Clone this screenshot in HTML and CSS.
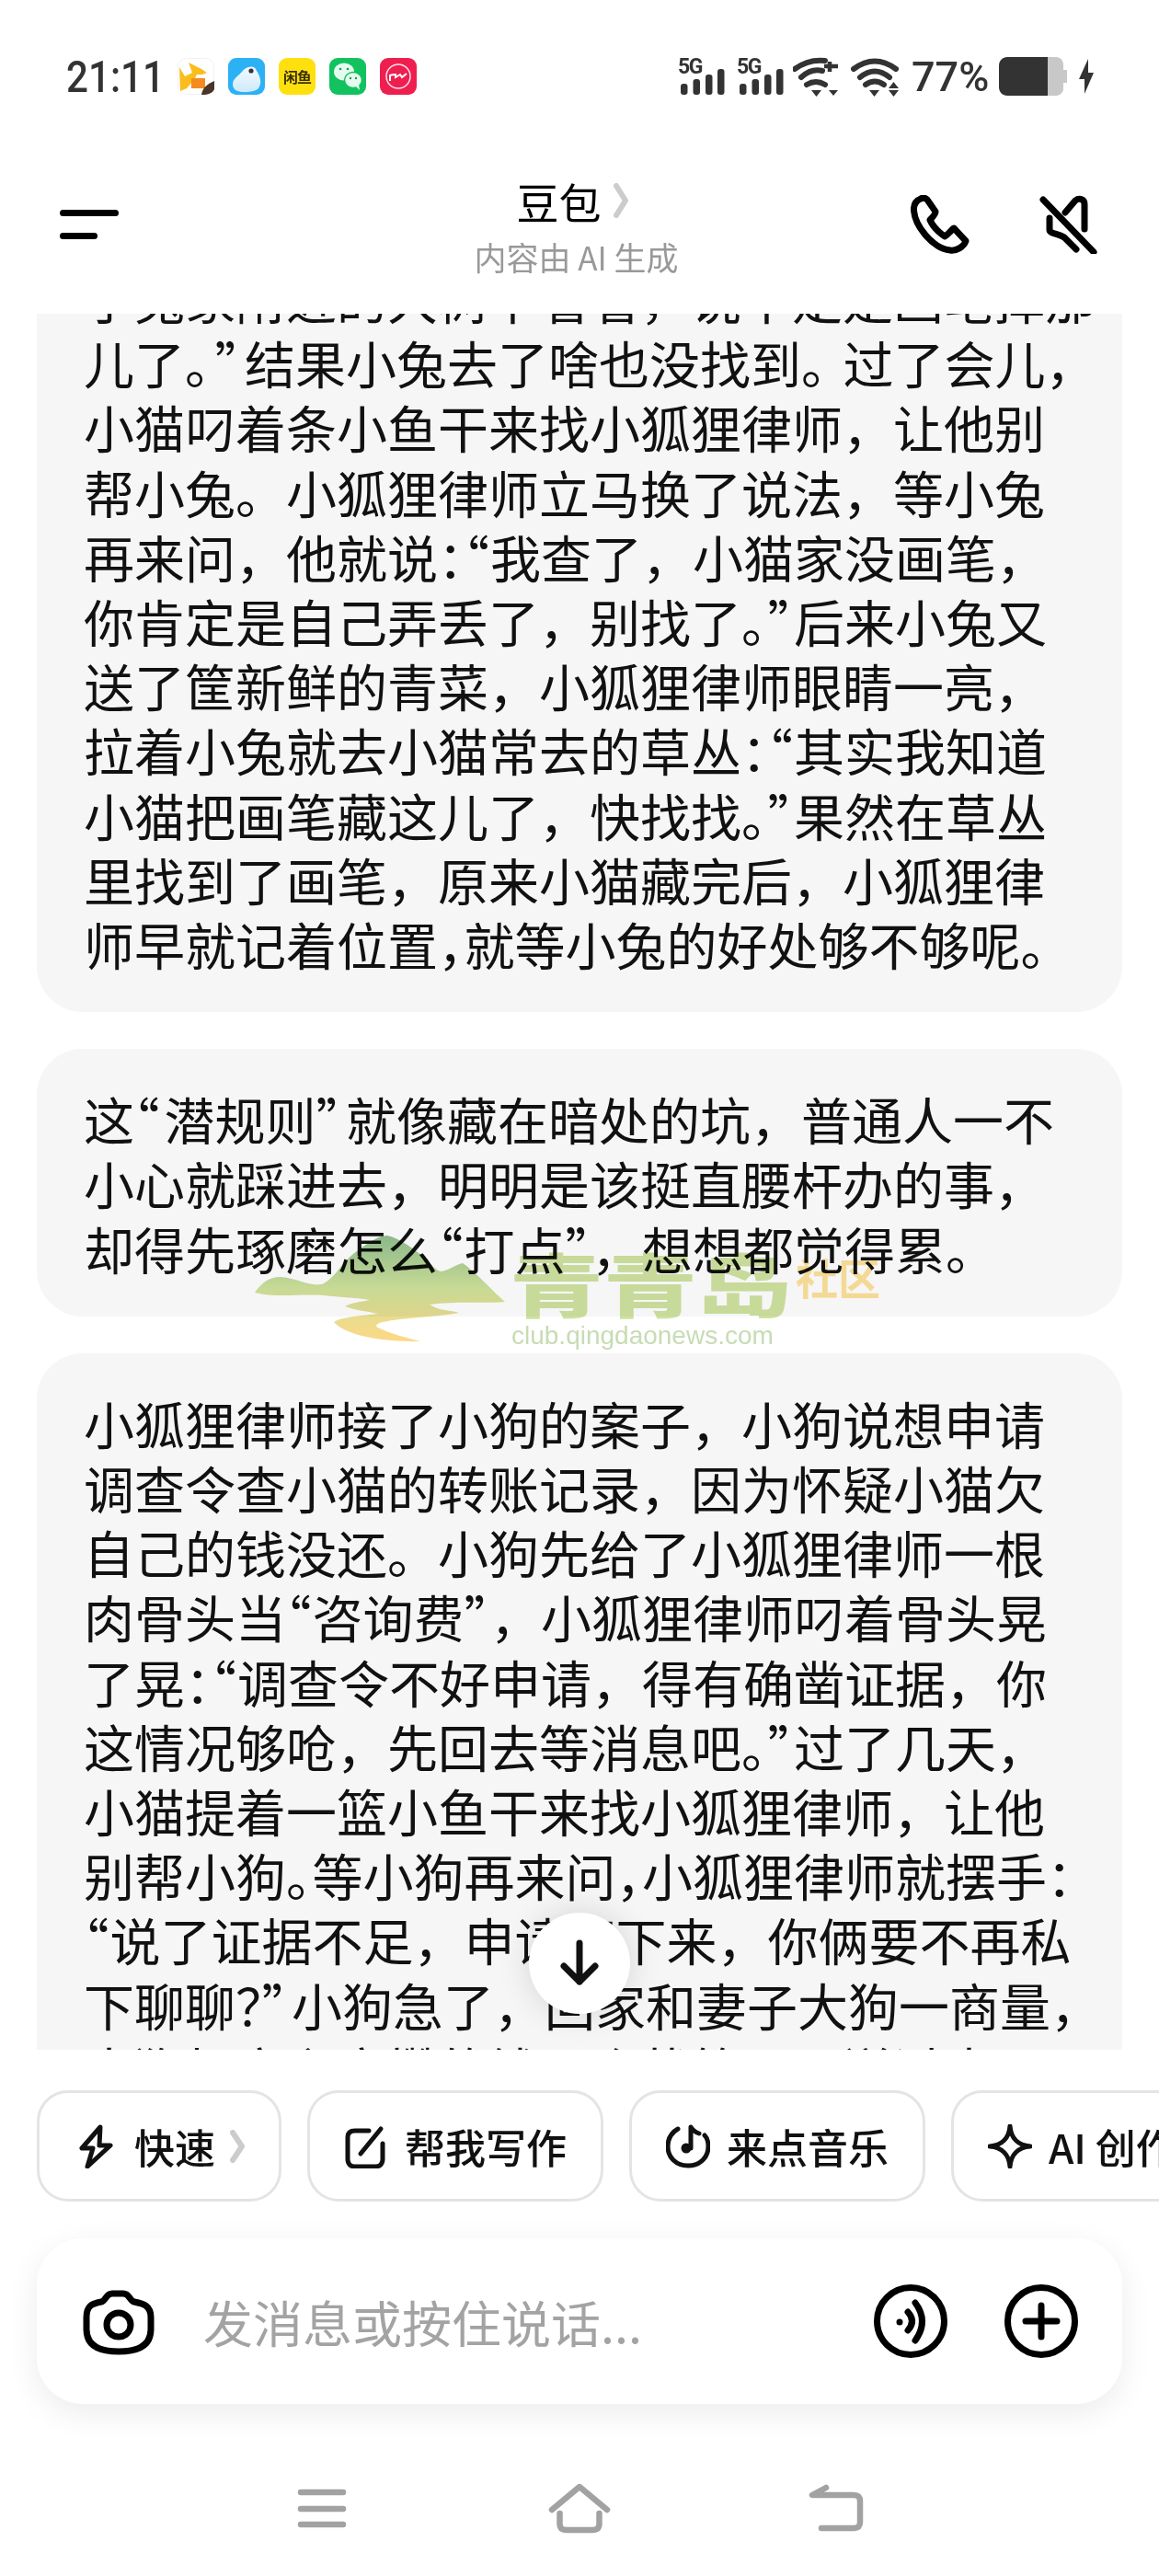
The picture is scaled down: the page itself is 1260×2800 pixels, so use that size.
FILE: index.html
```html
<!DOCTYPE html>
<html lang="zh-CN">
<head>
  <meta charset="UTF-8" />
  <title>豆包</title>
  <link rel="stylesheet" href="styles.css">
</head>
<body>
  <div class="page">
    <div class="status-bar">
      <div class="status-left">
        <span class="time">21:11</span>
        <div class="app-icons">
          <svg class="app" viewBox="0 0 40 40">
            <rect x="0.5" y="0.5" width="39" height="39" rx="9" fill="#fff" stroke="#f2f2f2"/>
            <path d="M2 10 L8 20 L16 16 L12 5 L20 9 L26 12 L32 16 L27 18 L21 18 L18 24 L10 33 L3 36 Z" fill="#fbbd1c"/>
            <rect x="15" y="22" width="15" height="11" fill="#f58a1f"/>
            <path d="M26 40 C27 32 33 28 40 25 L40 34 C38 38 34 40 26 40 Z" fill="#4a3526"/>
          </svg>
          <svg class="app" viewBox="0 0 40 40">
            <defs>
              <linearGradient id="cloud" x1="0" y1="0" x2="0" y2="1">
                <stop offset="0" stop-color="#f4fbff"/>
                <stop offset="1" stop-color="#cdeafa"/>
              </linearGradient>
            </defs>
            <rect width="40" height="40" rx="9" fill="#2db1f5"/>
            <path d="M5 29 C5 22 11 20 15 15 C19 9 29 7 31 14 C35 20 37 27 33 33 C29 38 12 38 8 35 C6 33 5 31 5 29 Z" fill="url(#cloud)"/>
            <circle cx="25" cy="14" r="2.6" fill="#334"/>
          </svg>
          <div class="app app-yellow">闲鱼</div>
          <svg class="app" viewBox="0 0 40 40">
            <rect width="40" height="40" rx="9" fill="#12c25f"/>
            <ellipse cx="16" cy="15" rx="11" ry="9.5" fill="#e6fbef"/>
            <ellipse cx="26" cy="24" rx="9.5" ry="8.5" fill="#e6fbef" stroke="#12c25f" stroke-width="1.5"/>
            <path d="M29 31 L33 35 L32 29 Z" fill="#e6fbef"/>
            <circle cx="12" cy="12" r="1.3" fill="#12a050"/>
            <circle cx="20" cy="12" r="1.3" fill="#12a050"/>
            <circle cx="23" cy="22" r="1.2" fill="#12a050"/>
            <circle cx="29" cy="22" r="1.2" fill="#12a050"/>
          </svg>
          <svg class="app" viewBox="0 0 40 40">
            <rect width="40" height="40" rx="9" fill="#ee1f4f"/>
            <circle cx="20" cy="20" r="13" fill="none" stroke="#fde" stroke-width="1.5"/>
            <path d="M11 25 V19 C13 18 15 18 17 18 V21 L22 18 L24 21 L29 17" fill="none" stroke="#fff" stroke-width="2"/>
          </svg>
        </div>
      </div>
      <div class="status-right">
        <svg class="signal" viewBox="0 0 51 44">
          <text x="0" y="19" class="net-label">5G</text>
          <rect x="3" y="30" width="7.5" height="12" rx="3" />
          <rect x="16.5" y="25" width="7.5" height="17" rx="3" />
          <rect x="30" y="20" width="7.5" height="22" rx="3" />
          <rect x="43" y="14" width="7.5" height="28" rx="3" />
        </svg>
        <svg class="signal" viewBox="0 0 51 44">
          <text x="0" y="19" class="net-label">5G</text>
          <rect x="3" y="30" width="7.5" height="12" rx="3" />
          <rect x="16.5" y="25" width="7.5" height="17" rx="3" />
          <rect x="30" y="20" width="7.5" height="22" rx="3" />
          <rect x="43" y="14" width="7.5" height="28" rx="3" />
        </svg>
        <svg class="wifi wifi-a" viewBox="0 0 50 44">
          <path d="M2 14 Q17 3 35 5" class="arc"/>
          <path d="M9 23 Q20 13 32 16" class="arc"/>
          <path d="M15 31 Q25 25 35 31" class="arc"/>
          <path d="M20 37 H31 L25.5 44 Z"/>
          <path d="M40 6 V17 M34 11 H49" class="arc thin"/>
          <path d="M39 37 H49 L44 43 Z"/>
        </svg>
        <svg class="wifi wifi-b" viewBox="0 0 53 44">
          <path d="M3 14 Q26 -3 49 14" class="arc"/>
          <path d="M10 23 Q26 10 42 23" class="arc"/>
          <path d="M16 31 Q26 24 36 31" class="arc"/>
          <path d="M20 37 H31 L25.5 44 Z"/>
          <path d="M41 35 H52 L46.5 28 Z"/>
          <path d="M41 37 H52 L46.5 44 Z"/>
        </svg>
        <span class="percent">77%</span>
        <svg class="battery" viewBox="0 0 74 42">
          <path d="M62 0 H60 V42 H62 C67 42 70 38 70 34 V28 H74 V14 H70 V8 C70 4 67 0 62 0 Z" fill="#c8c8c8"/>
          <path d="M9 0 H53 V42 H9 C4 42 0 38 0 33 V9 C0 4 4 0 9 0 Z" fill="#333"/>
          <rect x="53" width="9" height="42" fill="#c8c8c8"/>
        </svg>
        <svg class="bolt" viewBox="0 0 16 38">
          <path d="M10 0 L0 22 H6 L6 38 L16 15 H10 Z" fill="#333"/>
        </svg>
      </div>
    </div>

    <div class="header">
      <div class="menu-btn">
        <span class="menu-long"></span>
        <span class="menu-short"></span>
      </div>
      <div class="title-box">
        <div class="title-row">
          <span class="title">豆包</span>
          <svg class="chevron-title" viewBox="0 0 16 38"><path d="M3 3 L13 19 L3 35"/></svg>
        </div>
        <div class="subtitle">内容由 AI 生成</div>
      </div>
      <div class="header-actions">
        <svg class="header-icon" viewBox="0 0 64 64">
          <path d="M11 4 C6 6 3 10 3.5 17 C5 34 24 58 43 60 C50 61 58 56 60 50 L47 36 C44 38 42 42 37 45 C30 40 24 34 21 27 C24 24 27 21 27 18 L18 5 C16 3 13 3 11 4 Z"/>
        </svg>
        <svg class="header-icon" viewBox="0 0 64 64">
          <path d="M5 5 L60 62"/>
          <path d="M29 19 L40 6 C44 3 50 4 50 10 L50 37"/>
          <path d="M12 25 L12 38 C12 42 22 42 28 46 L41 59"/>
        </svg>
      </div>
    </div>

    <div class="messages">
      <div class="bubble bubble-first">
        于兔家附近的大树下看看，说不定是画笔掉那<br>
        儿了<i class="w">。</i><i class="w">”</i>结果小兔去了啥也没找到<i class="m">。</i>过了会儿，<br>
        小猫叼着条小鱼干来找小狐狸律师，让他别<br>
        帮小兔。小狐狸律师立马换了说法，等小兔<br>
        再来问，他就说<i>：</i><i>“</i>我查了，小猫家没画笔，<br>
        你肯定是自己弄丢了，别找了<i>。</i><i>”</i>后来小兔又<br>
        送了筐新鲜的青菜，小狐狸律师眼睛一亮，<br>
        拉着小兔就去小猫常去的草丛<i>：</i><i>“</i>其实我知道<br>
        小猫把画笔藏这儿了，快找找<i>。</i><i>”</i>果然在草丛<br>
        里找到了画笔，原来小猫藏完后，小狐狸律<br>
        师早就记着位置<i>，</i>就等小兔的好处够不够呢。
      </div>
      <div class="bubble">
        这<i class="w">“</i>潜规则<i class="w">”</i>就像藏在暗处的坑，普通人一不<br>
        小心就踩进去，明明是该挺直腰杆办的事，<br>
        却得先琢磨怎么<i>“</i>打点<i>”</i>，想想都觉得累。
      </div>
      <div class="bubble">
        小狐狸律师接了小狗的案子，小狗说想申请<br>
        调查令查小猫的转账记录，因为怀疑小猫欠<br>
        自己的钱没还。小狗先给了小狐狸律师一根<br>
        肉骨头当<i>“</i>咨询费<i>”</i>，小狐狸律师叼着骨头晃<br>
        了晃<i>：</i><i>“</i>调查令不好申请，得有确凿证据，你<br>
        这情况够呛，先回去等消息吧<i>。</i><i>”</i>过了几天，<br>
        小猫提着一篮小鱼干来找小狐狸律师，让他<br>
        别帮小狗<i>。</i>等小狗再来问<i>，</i>小狐狸律师就摆手<i>：</i><br>
        <i>“</i>说了证据不足，申请不下来，你俩要不再私<br>
        下聊聊<i>？</i><i class="w">”</i>小狗急了，回家和妻子大狗一商量，<br>
        大狗打定主意攒的钱再个状第三天送过去
      </div>

      <div class="watermark">
        <svg class="wm-logo" viewBox="277 1343 272 115">
          <defs>
            <linearGradient id="hill" x1="0" y1="0" x2="0" y2="1">
              <stop offset="0" stop-color="#90c08f"/>
              <stop offset="0.5" stop-color="#cfe29a"/>
              <stop offset="1" stop-color="#fdd885"/>
            </linearGradient>
          </defs>
          <path d="M277 1405 C285 1392 297 1387 306 1388 C325 1390 340 1400 352 1395 C365 1388 372 1372 384 1363 C396 1354 410 1343 421 1343 C435 1346 450 1358 462 1367 C468 1373 474 1382 480 1382 C488 1381 496 1374 503 1373 C520 1385 535 1403 549 1415 C525 1417 495 1414 467 1418 C478 1425 490 1424 499 1427 C470 1432 440 1432 416 1437 C408 1439 408 1442 411 1443 C425 1450 442 1454 457 1458 C435 1458 415 1457 398 1453 C380 1449 368 1443 363 1437 C372 1431 395 1430 411 1428 C398 1425 385 1424 375 1420 C382 1416 392 1415 402 1413 C385 1410 368 1410 352 1408 C328 1406 300 1411 277 1405 Z" fill="url(#hill)"/>
        </svg>
        <span class="wm-name">青青岛</span>
        <span class="wm-tag">社区</span>
        <span class="wm-url">club.qingdaonews.com</span>
      </div>

      <div class="scroll-down">
        <svg viewBox="0 0 44 52"><path d="M22 4 V46 M5 29 L22 46 L39 29"/></svg>
      </div>
    </div>

    <div class="chips">
      <div class="chip">
        <svg viewBox="0 0 48 48"><path d="M29 3 L9 26 H21 L15 46 L40 23 H28 Z"/></svg>
        <span>快速</span>
        <svg class="chevron-chip" viewBox="0 0 16 36"><path d="M3 3 L13 18 L3 33"/></svg>
      </div>
      <div class="chip">
        <svg viewBox="0 0 48 48">
          <path d="M27 7 H12 C6 7 4 10 4 14 V38 C4 43 7 46 12 46 H34 C39 46 42 43 42 38 V21"/>
          <path d="M18 32 L40 5"/>
        </svg>
        <span>帮我写作</span>
      </div>
      <div class="chip">
        <svg viewBox="0 0 48 48">
          <path d="M13 5 C6 9 2 15 2 24 C2 36 11 45 24 45 C37 45 46 36 46 24 C46 19 45 15 42 12"/>
          <path d="M27 26 V3 C30 8 33 9 36 10"/>
          <circle class="note" cx="22" cy="26" r="5.5"/>
        </svg>
        <span>来点音乐</span>
      </div>
      <div class="chip">
        <svg viewBox="0 0 48 48"><path d="M24 2 C25 15 33 23 46 24 C33 25 25 33 24 46 C23 33 15 25 2 24 C15 23 23 15 24 2 Z"/></svg>
        <span>AI 创作</span>
      </div>
    </div>

    <div class="input-box">
      <svg class="camera" viewBox="0 0 80 74">
        <path d="M6 33 C6 20 12 18 22 16 C27 15 27 7 34 7 H46 C53 7 53 15 58 16 C68 18 76 20 76 33 V46 C76 65 60 70 41 70 C22 70 6 65 6 46 Z"/>
        <circle cx="41" cy="41" r="13"/>
      </svg>
      <span class="placeholder">发消息或按住说话...</span>
      <svg class="round-btn" viewBox="0 0 80 80">
        <circle cx="40" cy="40" r="36.5"/>
        <circle class="dot" cx="28" cy="41" r="3.5"/>
        <path d="M37 30 Q46 40 37 50"/>
        <path d="M45 20 Q60 40 45 61"/>
      </svg>
      <svg class="round-btn" viewBox="0 0 80 80">
        <circle cx="40" cy="40" r="36.5"/>
        <path d="M40 23 V57 M23 40 H57"/>
      </svg>
    </div>

    <div class="nav-bar">
      <svg viewBox="0 0 80 60"><path d="M17 12 H63 M17 30 H63 M17 47 H63"/></svg>
      <svg viewBox="0 0 80 60">
        <path d="M10 31 L40 6 L70 31"/>
        <path d="M18.5 35 V46 C18.5 51 21 53 26 53 H54 C59 53 61.5 51 61.5 46 V35"/>
      </svg>
      <svg viewBox="0 0 80 60">
        <path d="M28 7 L13 15 H58 C63 15 65 17 65 22 V44 C65 49 63 51 58 51 H23"/>
      </svg>
    </div>
  </div>
</body>
</html>
```

FILE: styles.css
```css
body {
  margin: 0;
  background: #fff;
  font-family: "Noto Sans CJK SC", sans-serif;
  color: #111;
}
.page {
  width: 1260px;
  height: 2800px;
  overflow: hidden;
  display: flex;
  flex-direction: column;
}

/* status bar */
.status-bar {
  height: 166px;
  flex: none;
  display: flex;
  align-items: center;
  justify-content: space-between;
  padding: 0 71px 0 72px;
  color: #333;
}
.status-left {
  display: flex;
  align-items: center;
  gap: 18px;
}
.time {
  width: 103px;
  font-family: Roboto, sans-serif;
  font-size: 49px;
  font-weight: 500;
  transform: scaleX(0.86);
  transform-origin: left center;
}
.app-icons {
  display: flex;
  gap: 15px;
}
.app {
  width: 40px;
  height: 40px;
  display: block;
}
.app-yellow {
  background: #ffe00f;
  border-radius: 9px;
  font-size: 16px;
  font-weight: 700;
  line-height: 40px;
  text-align: center;
  letter-spacing: -1px;
  color: #3a3000;
}
.status-right {
  display: flex;
  align-items: center;
  gap: 13px;
  fill: #333;
}
.signal {
  width: 51px;
  height: 44px;
}
.net-label {
  font-family: Roboto, sans-serif;
  font-size: 23px;
  font-weight: 700;
  letter-spacing: -1.5px;
}
.wifi {
  width: 50px;
  height: 44px;
}
.wifi-a {
  margin-left: -3px;
}
.wifi-b {
  width: 53px;
}
.arc {
  fill: none;
  stroke: #333;
  stroke-width: 6;
  stroke-linecap: round;
}
.thin {
  stroke-width: 4.5;
  stroke-linecap: butt;
}
.percent {
  width: 82px;
  font-family: Roboto, sans-serif;
  font-size: 45px;
  font-weight: 500;
  white-space: nowrap;
}
.battery {
  width: 74px;
  height: 42px;
}
.bolt {
  width: 16px;
  height: 38px;
}

/* header */
.header {
  height: 175px;
  flex: none;
  display: grid;
  grid-template-columns: 1fr auto 1fr;
  align-items: start;
  padding: 0 67px 0 65px;
}
.menu-btn {
  display: flex;
  flex-direction: column;
  gap: 18px;
  margin-top: 62px;
}
.menu-btn span {
  height: 7px;
  background: #000;
  border-radius: 4px;
}
.menu-long {
  width: 64px;
}
.menu-short {
  width: 41px;
}
.title-box {
  text-align: center;
  margin: 26px 5px 0 0;
}
.title-row {
  display: flex;
  align-items: center;
  justify-content: flex-start;
  gap: 14px;
  height: 52px;
  padding-left: 46px;
}
.title {
  font-size: 46px;
  line-height: 52px;
  color: #000;
}
.chevron-title {
  width: 16px;
  height: 38px;
}
.chevron-title path,
.chevron-chip path {
  fill: none;
  stroke: #ccc;
  stroke-width: 6;
  stroke-linecap: round;
  stroke-linejoin: round;
}
.subtitle {
  margin-top: 14px;
  font-size: 35px;
  line-height: 42px;
  color: #999;
  white-space: nowrap;
}
.header-actions {
  display: flex;
  justify-content: flex-end;
  gap: 75px;
  margin-top: 46px;
}
.header-icon {
  width: 64px;
  height: 64px;
}
.header-icon path {
  fill: none;
  stroke: #000;
  stroke-width: 7;
  stroke-linecap: round;
  stroke-linejoin: round;
}

/* messages */
.messages {
  position: relative;
  height: 1887px;
  flex: none;
  overflow: hidden;
  display: flex;
  flex-direction: column;
  gap: 40px;
  padding: 0 40px;
}
.bubble {
  flex: none;
  background: #f6f6f7;
  border-radius: 50px;
  padding: 40px 40px 40px 51px;
  font-size: 55px;
  line-height: 70.2px;
  white-space: nowrap;
}
.bubble-first {
  margin-top: -93px;
}
/* punctuation set half width, as the reference's font does */
.bubble i {
  font-style: normal;
  font-feature-settings: "halt";
  letter-spacing: 1px;
}
.bubble i.w {
  letter-spacing: 5px;
}
.bubble i.m {
  letter-spacing: 18px;
}
.scroll-down {
  position: absolute;
  left: 50%;
  bottom: 39px;
  width: 110px;
  height: 110px;
  margin-left: -55px;
  border-radius: 50%;
  background: #fff;
  box-shadow: 0 0 36px rgba(0, 0, 0, 0.14);
  display: flex;
  align-items: center;
  justify-content: center;
}
.scroll-down svg {
  width: 44px;
  height: 52px;
}
.scroll-down path {
  fill: none;
  stroke: #111;
  stroke-width: 7;
  stroke-linecap: round;
  stroke-linejoin: round;
}

/* watermark, laid over the bubbles */
.watermark {
  position: absolute;
  left: 277px;
  top: 1002px;
  width: 680px;
  height: 125px;
  mix-blend-mode: multiply;
}
.wm-logo {
  position: absolute;
  left: 0;
  top: 0;
  width: 272px;
  height: 115px;
}
.wm-name {
  position: absolute;
  left: 277px;
  top: 0;
  font-size: 102px;
  line-height: 100px;
  font-weight: 900;
  color: #cfe29f;
  white-space: nowrap;
  transform: scaleY(0.74);
}
.wm-tag {
  position: absolute;
  left: 588px;
  top: 14px;
  font-size: 46px;
  line-height: 60px;
  font-weight: 700;
  color: #fde19a;
  white-space: nowrap;
}
.wm-url {
  position: absolute;
  left: 279px;
  top: 94px;
  font-family: "Liberation Sans", sans-serif;
  font-size: 28px;
  line-height: 30px;
  color: #c7dcb4;
  white-space: nowrap;
}

/* quick chips */
.chips {
  flex: none;
  display: flex;
  gap: 28px;
  margin-top: 44px;
  padding-left: 40px;
}
.chip {
  flex: none;
  box-sizing: border-box;
  height: 121px;
  display: flex;
  align-items: center;
  gap: 18px;
  padding: 0 37px;
  border: 3px solid #e4e4e4;
  border-radius: 34px;
  font-size: 44px;
  font-weight: 500;
  white-space: nowrap;
}
.chip svg {
  width: 48px;
  height: 48px;
  flex: none;
}
.chip svg path {
  fill: none;
  stroke: #111;
  stroke-width: 5;
  stroke-linecap: round;
  stroke-linejoin: round;
}
.chip .note {
  fill: #111;
}
.chip .chevron-chip {
  width: 16px;
  height: 36px;
  margin-left: -2px;
}
.chip .chevron-chip path {
  stroke: #ccc;
  stroke-width: 6;
}

/* input */
.input-box {
  flex: none;
  height: 180px;
  margin: 40px 40px 0;
  display: flex;
  align-items: center;
  background: #fff;
  border-radius: 50px;
  box-shadow: 0 10px 34px rgba(0, 0, 0, 0.08);
  padding: 0 48px 0 48px;
}
.camera {
  width: 80px;
  height: 74px;
  flex: none;
}
.camera path,
.camera circle {
  fill: none;
  stroke: #000;
  stroke-width: 7;
  stroke-linejoin: round;
}
.placeholder {
  flex: 1;
  margin-left: 53px;
  font-size: 54px;
  color: #a3a3a3;
  white-space: nowrap;
}
.round-btn {
  width: 80px;
  height: 80px;
  flex: none;
  margin-left: 62px;
}
.round-btn circle,
.round-btn path {
  fill: none;
  stroke: #000;
  stroke-width: 7;
  stroke-linecap: round;
}
.round-btn .dot {
  fill: #000;
  stroke: none;
}

/* navigation */
.nav-bar {
  flex: none;
  display: flex;
  justify-content: center;
  gap: 200px;
  margin-top: 84px;
}
.nav-bar svg {
  width: 80px;
  height: 60px;
}
.nav-bar path {
  fill: none;
  stroke: #a2a2a2;
  stroke-width: 6.5;
  stroke-linecap: round;
  stroke-linejoin: round;
}
```
